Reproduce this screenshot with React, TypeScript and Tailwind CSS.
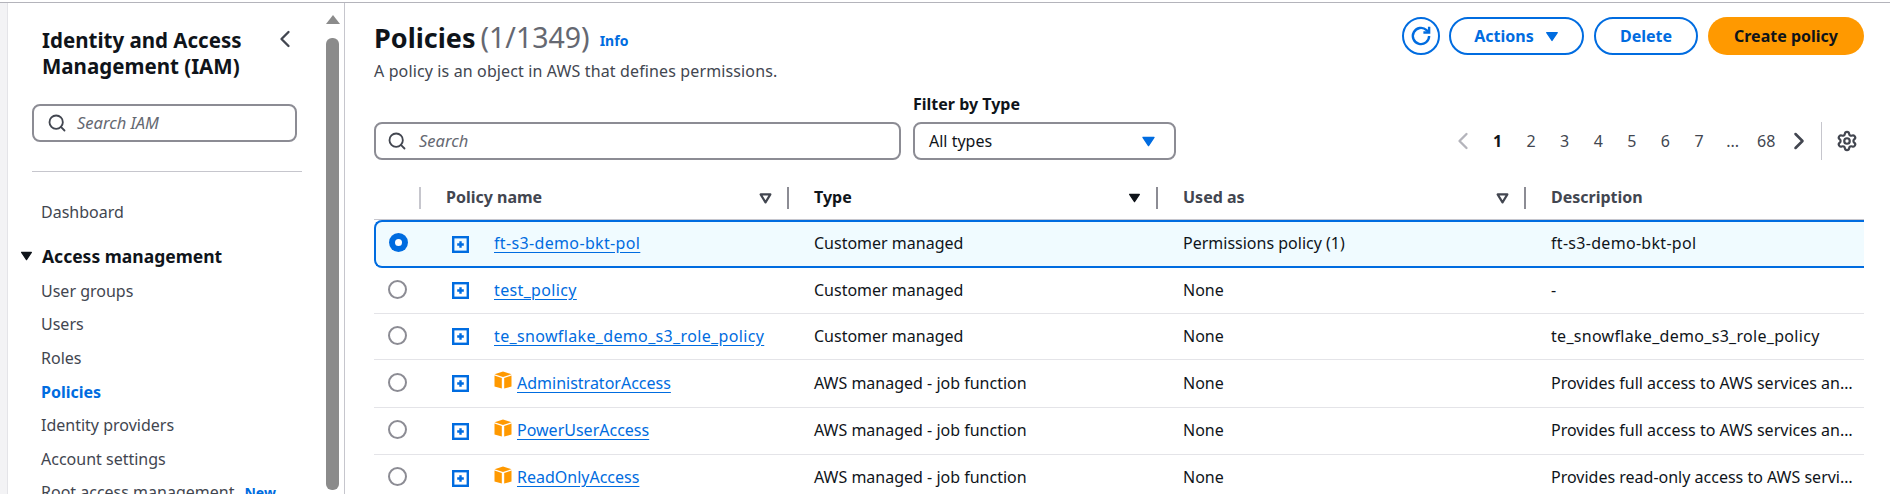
import React from "react";
import { ChevronLeft, ChevronRight, Search, Settings } from "lucide-react";

const Tri = ({ className }: { className: string }) => (
  <svg viewBox="0 0 16 12" className={className}>
    <path d="M2 1.5h12L8 10.5z" fill="currentColor" stroke="currentColor" strokeWidth="1.5" strokeLinejoin="round" />
  </svg>
);

const SortTri = () => (
  <svg viewBox="0 0 12 10" className="w-[13px] h-[11px] text-[#424650]">
    <path d="M1.5 1.2h9L6 8.6z" fill="none" stroke="currentColor" strokeWidth="2" strokeLinejoin="round" />
  </svg>
);

const Expand = () => (
  <svg viewBox="0 0 17 17" className="w-[17px] h-[17px] text-[#006ce0] shrink-0">
    <rect x="1.2" y="1.2" width="14.6" height="14.6" fill="none" stroke="currentColor" strokeWidth="2.4" />
    <path d="M8.5 5.2v6.6M5.2 8.5h6.6" stroke="currentColor" strokeWidth="2.4" />
  </svg>
);

const Cube = () => (
  <svg viewBox="0 0 18 18" className="w-[18px] h-[18px] shrink-0 -mt-[7px]">
    <path d="M9 0.5 L17.5 3.2 L9 6 L0.5 3.2z" fill="#ff9900" />
    <path d="M0.5 4.5 L7.8 7 V17.5 L0.5 15.5z" fill="#ff9900" />
    <path d="M17.5 4.5 L10.2 7 V17.5 L17.5 15.5z" fill="#ff9900" />
  </svg>
);

const Radio = ({ on }: { on?: boolean }) =>
  on ? (
    <span className="w-[19px] h-[19px] rounded-full bg-[#006ce0] flex items-center justify-center">
      <span className="w-[7px] h-[7px] rounded-full bg-white" />
    </span>
  ) : (
    <span className="w-[19px] h-[19px] rounded-full border-2 border-[#8c8c94] bg-white" />
  );

const gridCols = "grid grid-cols-[47px_368px_369px_368px_1fr]";
const gridColsSelected = "grid grid-cols-[45px_368px_369px_368px_1fr]";

const rows = [
  { name: "ft-s3-demo-bkt-pol", type: "Customer managed", used: "Permissions policy (1)", desc: "ft-s3-demo-bkt-pol", h: "h-[48px]" },
  { name: "test_policy", type: "Customer managed", used: "None", desc: "-", h: "h-[46px]" },
  { name: "te_snowflake_demo_s3_role_policy", type: "Customer managed", used: "None", desc: "te_snowflake_demo_s3_role_policy", h: "h-[46px]" },
  { name: "AdministratorAccess", aws: true, type: "AWS managed - job function", used: "None", desc: "Provides full access to AWS services and resources.", h: "h-[48px]" },
  { name: "PowerUserAccess", aws: true, type: "AWS managed - job function", used: "None", desc: "Provides full access to AWS services and resources, but not users.", h: "h-[47px]" },
  { name: "ReadOnlyAccess", aws: true, type: "AWS managed - job function", used: "None", desc: "Provides read-only access to AWS services and resources.", h: "h-[47px]" },
];

const nav = ["User groups", "Users", "Roles", "Policies", "Identity providers", "Account settings"];

const HeaderCell = ({ label, sort, strong, mr }: { label: string; sort: React.ReactNode; strong?: boolean; mr: string }) => (
  <div className="flex items-center h-[22px] border-r-2 border-[#8c8c94]">
    <span className={`font-bold -mt-[3px] ${strong ? "text-[#0f141a]" : "text-[#424650]"}`}>{label}</span>
    <span className={`ml-auto flex ${mr}`}>{sort}</span>
  </div>
);

export default function App() {
  return (
    <div className="h-[494px] w-[1890px] overflow-hidden bg-white text-[16px] text-[#0f141a] font-['Noto_Sans',sans-serif] pt-[2px]">
      <div className="h-[1px] bg-[#b4b4bb]" />
      <div className="flex h-[491px]">
        {/* Sidebar */}
        <aside className="w-[345px] shrink-0 flex border-l-[7px] border-l-[#f3f3f5] border-r border-r-[#c6c6cd] overflow-hidden">
          <div className="w-[314px] shrink-0 border-l border-[#e4e4e8] pl-[24px] pr-[19px] pt-[24px] overflow-hidden">
            <div className="flex justify-between pl-[10px]">
              <h1 className="text-[20.5px] leading-[26px] font-bold whitespace-nowrap">Identity and Access<br />Management (IAM)</h1>
              <ChevronLeft className="w-[28px] h-[28px] -mt-[2px] mr-[3px] text-[#424650]" strokeWidth={2} />
            </div>
            <div className="mt-[25px] mr-[5px] h-[38px] rounded-[8px] border-2 border-[#8c8c94] flex items-center pl-[13px] gap-[10px]">
              <Search className="w-[20px] h-[20px] text-[#424650]" strokeWidth={2.2} />
              <span className="italic text-[16.5px] text-[#656871]">Search IAM</span>
            </div>
            <div className="mt-[29px] h-px bg-[#c6c6cd]" />
            <div className="mt-[29px] pl-[9px] h-[22px] leading-[22px] text-[#424650]">Dashboard</div>
            <div className="mt-[21px] h-[24px] flex items-center">
              <Tri className="w-[13px] h-[10px] text-[#0f141a] -ml-[12px] shrink-0" />
              <span className="ml-[9px] text-[17.5px] font-bold whitespace-nowrap">Access management</span>
            </div>
            <div className="mt-[6px] flex flex-col pl-[9px]">
              {nav.map((n) => (
                <div key={n} className={`h-[33.6px] flex items-center ${n === "Policies" ? "font-bold text-[#006ce0]" : "text-[#424650]"}`}>
                  {n}
                </div>
              ))}
              <div className="h-[33.6px] flex items-center text-[#424650] whitespace-nowrap">
                Root access management <span className="ml-[10px] text-[14px] font-bold text-[#006ce0]">New</span>
              </div>
            </div>
          </div>
          {/* scrollbar */}
          <div className="w-[17px] shrink-0 ml-[3px] flex flex-col items-center pt-[12px] pb-[4px]">
            <div className="w-0 h-0 border-l-[7px] border-r-[7px] border-b-[9px] border-l-transparent border-r-transparent border-b-[#8b8b8b]" />
            <div className="mt-[14px] w-[13px] flex-1 rounded-[6px] bg-[#8b8b8b]" />
          </div>
        </aside>

        {/* Main */}
        <main className="flex-1 pl-[29px] pr-[26px] min-w-0 overflow-hidden">
          <div className="flex justify-between items-start pt-[14px] h-[60px]">
            <div>
              <div className="flex items-baseline h-[40px]">
                <span className="text-[27px] font-bold leading-[40px]">Policies</span>
                <span className="text-[28.5px] text-[#656871] leading-[40px] ml-[5px]">(1/1349)</span>
                <span className="ml-[10px] text-[14px] font-bold text-[#006ce0] -translate-y-[2px]">Info</span>
              </div>
              <div className="text-[#424650] leading-[20px] mt-[4px] tracking-[0.13px]">A policy is an object in AWS that defines permissions.</div>
            </div>
            <div className="flex items-center font-bold text-[#006ce0]">
              <button className="w-[38px] h-[38px] rounded-full border-2 border-[#006ce0] flex items-center justify-center">
                <svg viewBox="0 0 24 24" className="w-[26px] h-[26px]" fill="none" stroke="currentColor" strokeWidth="2.2">
                  <path d="M19.5 12a7.5 7.5 0 1 1-2.4-5.5L19 8.5" />
                  <path d="M19.5 3.5v5.3h-5.3" />
                </svg>
              </button>
              <button className="ml-[9px] w-[135px] h-[38px] rounded-full border-2 border-[#006ce0] flex items-center justify-center gap-[11px]">
                Actions <Tri className="w-[14px] h-[11px]" />
              </button>
              <button className="ml-[10px] w-[104px] h-[38px] rounded-full border-2 border-[#006ce0]">Delete</button>
              <button className="ml-[10px] w-[156px] h-[38px] rounded-full bg-[#ff9900] text-[#0f141a]">Create policy</button>
            </div>
          </div>

          <div className="flex items-end mt-[31px]">
            <div className="w-[527px] h-[38px] rounded-[8px] border-2 border-[#8c8c94] flex items-center pl-[11px] gap-[12px]">
              <Search className="w-[20px] h-[20px] text-[#424650]" strokeWidth={2.2} />
              <span className="italic text-[16.5px] text-[#656871]">Search</span>
            </div>
            <div className="ml-[12px] w-[263px]">
              <div className="font-bold leading-[20px] mb-[8px]">Filter by Type</div>
              <div className="h-[38px] rounded-[8px] border-2 border-[#8c8c94] flex items-center justify-between pl-[14px] pr-[18px] text-[#0f141a]">
                All types
                <Tri className="w-[15px] h-[11px] text-[#006ce0]" />
              </div>
            </div>
            <div className="ml-auto flex items-center h-[38px] text-[#424650]">
              <ChevronLeft className="w-[28px] h-[28px] text-[#b4b4bb] mr-[4px]" strokeWidth={2} />
              <div className="flex items-center">
                {["1", "2", "3", "4", "5", "6", "7", "...", "68"].map((p, i) => (
                  <span key={p} className={`w-[33.6px] text-center ${i === 0 ? "font-bold text-[#0f141a]" : ""}`}>{p}</span>
                ))}
              </div>
              <ChevronRight className="w-[28px] h-[28px] text-[#424650] ml-[2px]" strokeWidth={2.2} />
              <div className="ml-[8px] w-px h-[38px] bg-[#c6c6cd]" />
              <Settings className="ml-[14px] mr-[6px] w-[22px] h-[22px] text-[#424650]" strokeWidth={2.4} />
            </div>
          </div>

          <div className={`${gridCols} items-center mt-[27px] h-[22px] box-content pb-[10px] border-b border-[#c6c6cd]`}>
            <div className="h-[22px] border-r-2 border-[#c6c6cd]" />
            <div className="pl-[25px]"><HeaderCell label="Policy name" mr="mr-[15px]" sort={<SortTri />} /></div>
            <div className="pl-[25px]"><HeaderCell label="Type" strong mr="mr-[15px]" sort={<Tri className="w-[13px] h-[10px] text-[#0f141a]" />} /></div>
            <div className="pl-[25px]"><HeaderCell label="Used as" mr="mr-[15px]" sort={<SortTri />} /></div>
            <div className="pl-[25px] font-bold text-[#424650] -mt-[3px]">Description</div>
          </div>

          {rows.map((r, i) => (
            <div
              key={r.name}
              className={`${i === 0 ? gridColsSelected : gridCols} items-center ${r.h} ${
                i === 0
                  ? "bg-[#f0fbff] border-y-2 border-l-2 border-[#006ce0] rounded-l-[8px]"
                  : "border-b border-[#e4e4e8]"
              }`}
            >
              <div className="flex justify-center -mt-[3px]"><Radio on={i === 0} /></div>
              <div className="flex items-center pl-[31px]">
                <Expand />
                <span className="ml-[25px] flex items-center gap-[5px]">
                  {r.aws && <Cube />}
                  <a className={`text-[#006ce0] underline underline-offset-[3px] -mt-[2px] ${r.aws ? "" : "tracking-[0.35px]"}`}>{r.name}</a>
                </span>
              </div>
              <div className="pl-[25px] -mt-[2px]">{r.type}</div>
              <div className="pl-[25px] -mt-[2px]">{r.used}</div>
              <div className={`pl-[25px] pr-[8px] -mt-[2px] truncate ${r.aws ? "" : "tracking-[0.3px]"}`}>{r.desc}</div>
            </div>
          ))}
        </main>
      </div>
    </div>
  );
}
